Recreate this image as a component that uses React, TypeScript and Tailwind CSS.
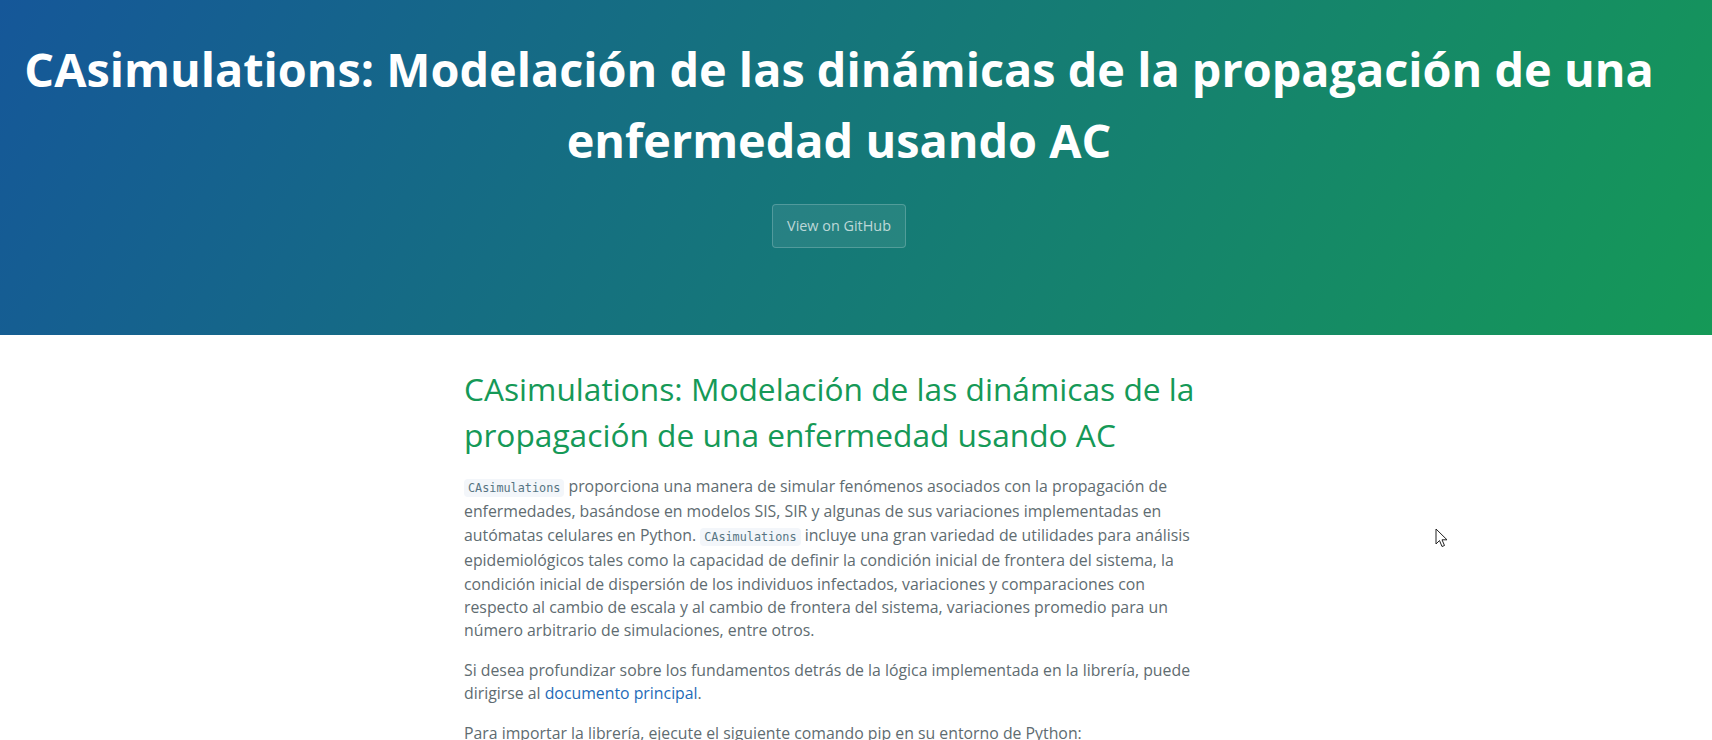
import React from "react";

const Code = ({ children }: { children: React.ReactNode }) => (
  <code className="rounded-[4px] bg-[#f3f6fa] px-[4px] py-[2px] font-['DejaVu_Sans_Mono',monospace] text-[11.8px] text-[#567482]">
    {children}
  </code>
);

const App = () => {
  return (
    <div className="min-h-screen bg-white font-['Open_Sans',sans-serif]">
      {/* Header */}
      <section className="bg-[linear-gradient(120deg,#155799,#159957)] pl-[8px] pr-[42px] pt-[34px] pb-[87px] text-center text-white">
        <h1 className="mb-[28px] text-[46.8px] font-bold leading-[71px]">
          CAsimulations: Modelación de las dinámicas de la propagación de una enfermedad usando AC
        </h1>
        <a
          href="#"
          className="inline-block rounded-[4px] border border-white/20 bg-white/[0.08] px-[14px] py-[10px] text-[14.4px] leading-[22px] text-white/70"
        >
          View on GitHub
        </a>
      </section>

      {/* Main content */}
      <section className="pr-[48px] pt-[31px] pb-8">
        <div className="mx-auto max-w-[736px] text-[15.84px] leading-[23.4px] text-[#606c71]">
          <h1 className="mb-[17px] text-[31.7px] font-normal leading-[46px] text-[#159957]">
            CAsimulations: Modelación de las dinámicas de la propagación de una enfermedad usando AC
          </h1>
          <p className="mb-[16px]">
            <Code>CAsimulations</Code> proporciona una manera de simular fenómenos asociados con la propagación de
            enfermedades, basándose en modelos SIS, SIR y algunas de sus variaciones implementadas en autómatas
            celulares en Python. <Code>CAsimulations</Code> incluye una gran variedad de utilidades para análisis
            epidemiológicos tales como la capacidad de definir la condición inicial de frontera del sistema, la
            condición inicial de dispersión de los individuos infectados, variaciones y comparaciones con respecto al
            cambio de escala y al cambio de frontera del sistema, variaciones promedio para un número arbitrario de
            simulaciones, entre otros.
          </p>
          <p className="mb-[16px]">
            Si desea profundizar sobre los fundamentos detrás de la lógica implementada en la librería, puede
            dirigirse al{" "}
            <a href="#" className="text-[#1e6bb8]">
              documento principal
            </a>
            .
          </p>
          <p className="mb-[16px]">Para importar la librería, ejecute el siguiente comando pip en su entorno de Python:</p>
          <pre className="rounded-[4px] border border-[#e9ebec] bg-[#f3f6fa] p-[14px] font-['DejaVu_Sans_Mono',monospace] text-[12px] text-[#567482]">
            pip install CAsimulations
          </pre>
        </div>
      </section>

      {/* Mouse pointer */}
      <svg className="absolute left-[1435px] top-[528px]" width="14" height="21" viewBox="0 0 14 21">
        <path d="M1 1 L1 16 L4.5 12.5 L7 18.5 L9.5 17.5 L7 11.8 L12 11.8 Z" fill="white" stroke="#222" strokeWidth="1" strokeLinejoin="round" />
      </svg>
    </div>
  );
};

export default App;
